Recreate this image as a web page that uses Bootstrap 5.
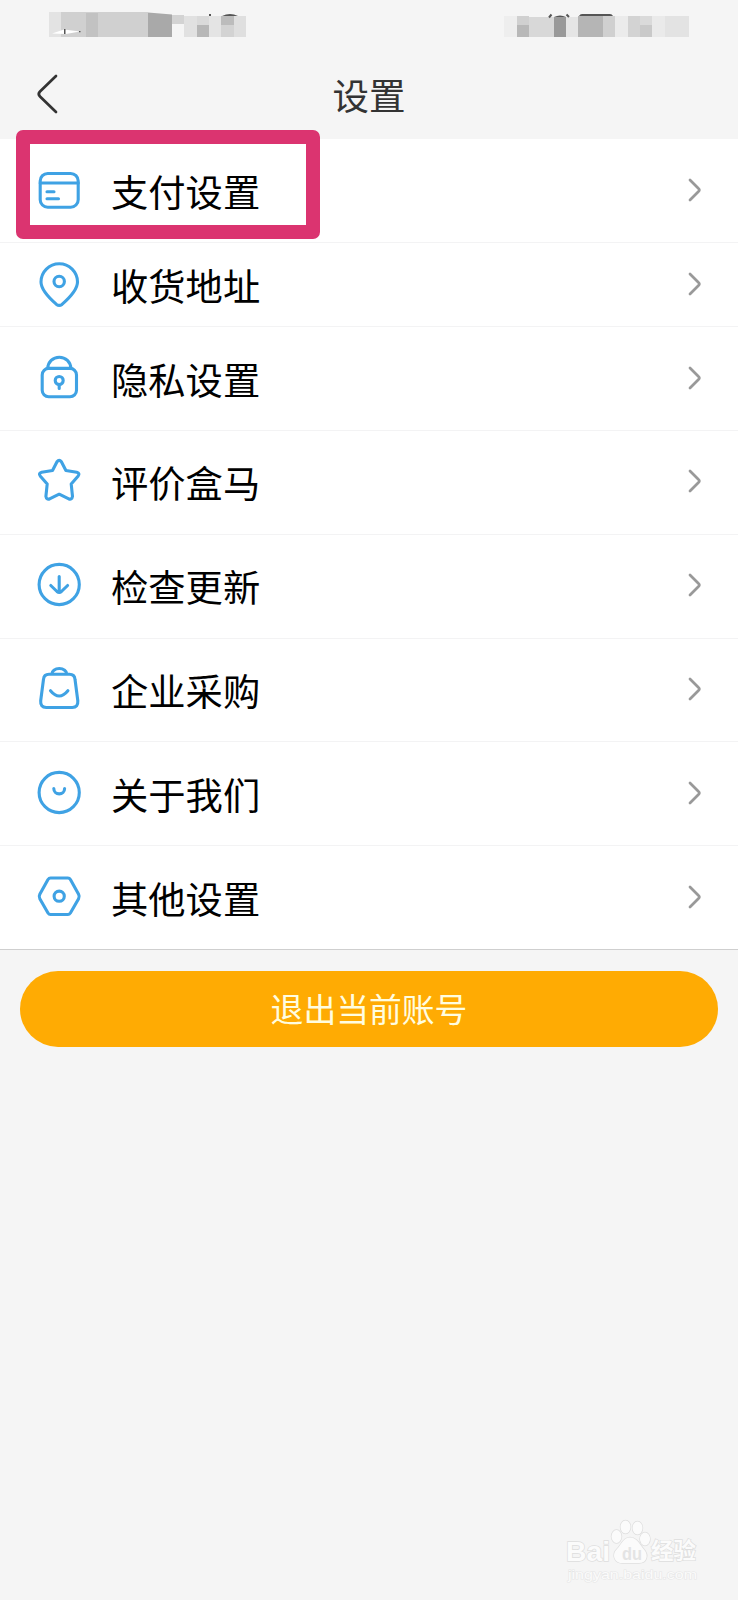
<!DOCTYPE html>
<html lang="zh-CN">
<head>
<meta charset="utf-8">
<meta name="viewport" content="width=device-width, initial-scale=1">
<title>设置</title>
<link href="https://cdn.jsdelivr.net/npm/bootstrap@5.3.0/dist/css/bootstrap.min.css" rel="stylesheet">
<style>
body{background:#f5f5f5;font-family:"Liberation Sans","Noto Sans CJK SC",sans-serif;color:#000}
.screen{min-height:1600px;overflow:hidden}
.statusbar{height:48px}
.topbar{height:91px;padding:0 34px;color:#333}
.topbar h1{font-family:"Noto Sans CJK SC",sans-serif;font-size:36.5px;line-height:50px;color:#333;padding-top:2px}
.side{width:30px}
.settings{border-bottom:1px solid #cfcfcf;background:#fff}
.settings .list-group-item{height:103.85px;padding:0 32px 1.6px 36px;border:0;border-bottom:1px solid #f3f3f4;color:#000;background:#fff}
.settings .list-group-item:last-child{border-bottom:0;height:103px}
.settings .first-row{height:104px;padding-bottom:1px}
.settings .short-row{height:84px;padding-bottom:1px}
.label-text{font-family:"Noto Sans CJK SC",sans-serif;font-size:37.3px;line-height:50px;margin-left:29px;padding-top:2px}
.ico{width:46px;height:46px;fill:none;stroke:#3fa2e4;stroke-width:3.1;stroke-linecap:round;stroke-linejoin:round}
.chev{width:20px;height:30px;fill:none;stroke:#999;stroke-width:2.8;stroke-linecap:round;stroke-linejoin:round}
.marker{position:absolute;left:16px;top:-9px;width:304px;height:109px;border:14px solid #db3470;border-radius:7px;z-index:3}
.logout{margin:21px 20px 0;height:76px;padding:0 0 3px;background:#ffab03;color:#fffde0;font-family:"Noto Sans CJK SC",sans-serif;font-size:32.8px;line-height:50px;border:0}
.logout:hover{background:#f5a300;color:#fffde0}
.mark-foot{margin:auto 38px 17px auto;width:134px;height:65px}
</style>
</head>
<body>
<div class="screen d-flex flex-column">
  <div class="statusbar">
    <svg class="d-block" width="738" height="48" aria-hidden="true">
      <g shape-rendering="crispEdges">
        <path fill="#e3e3e3" d="M49 12h12v25H49z"/><path fill="#d0d0d0" d="M61 12h87v25H61z"/>
        <path fill="#c2c2c2" d="M86 13h12v24H86z"/>
        <path fill="#d3d3d3" d="M172 15h12v9h-12z"/>
        <path fill="#e1e1e1" d="M184 16h13v21h-13z"/><path fill="#dadada" d="M197 16h12v9h-12z"/><path fill="#b7b7b7" d="M197 25h12v12h-12z"/>
        <path fill="#e4e4e4" d="M209 16h12v21h-12z"/><path fill="#bcbcbc" d="M221 16h13v9h-13z"/><path fill="#d3d3d3" d="M221 25h13v12h-13z"/><path fill="#dfdfdf" d="M234 16h12v21h-12z"/>
        <path fill="#eee" d="M504 16h13v21h-13z"/><path fill="#d0d0d0" d="M517 16h12v9h-12z"/><path fill="#b8b8b8" d="M517 25h12v12h-12z"/>
        <path fill="#d8d8d8" d="M529 17h25v20h-25z"/><path fill="#999" d="M554 17h12v20h-12z"/><path fill="#e5e5e5" d="M566 17h12v20h-12z"/>
        <path fill="#b5b5b5" d="M578 16h25v21h-25z"/><path fill="#d0d0d0" d="M603 16h12v21h-12z"/><path fill="#ebebeb" d="M615 16h13v21h-13z"/>
        <path fill="#d3d3d3" d="M628 16h12v21h-12z"/><path fill="#dadada" d="M640 16h12v9h-12z"/><path fill="#c9c9c9" d="M640 25h12v12h-12z"/>
        <path fill="#eaeaea" d="M652 16h13v21h-13z"/><path fill="#e3e3e3" d="M665 16h24v21h-24z"/>
      </g>
      <path fill="#a9a9a9" d="M148 12.500l24 2V37h-24z"/>
      <path fill="#fff" d="M52 33.500l12-4 16 2-14 2.500z"/><path fill="#555" d="M64 29h1.500v5H64zM79 31h1.500v1.200H79zM209 14h2v2h-2z"/>
      <path fill="#555" d="M222 16q8-4 16 0zM554 17q6-3 12 0zM579 16q1-2 3-2h28q2 0 3 2z"/>
      <path stroke="#555" stroke-width="2" d="M549 17.500l2.500-3M569 17l-2.500-2.500"/>
    </svg>
  </div>
  <header class="topbar d-flex align-items-center justify-content-between">
    <svg class="side" height="44" viewBox="0 0 30 44" fill="none" stroke="#333" stroke-width="2.700" stroke-linecap="round" stroke-linejoin="round" role="img" aria-label="返回"><path d="M22 4 6 19.500q-2.500 2.500 0 5L22 40"/></svg>
    <h1 class="m-0 fw-normal">设置</h1>
    <span class="side"></span>
  </header>

  <div class="list-group list-group-flush rounded-0 settings">
    <a href="#" class="list-group-item d-flex align-items-center first-row">
      <svg class="ico" viewBox="0 0 46 46"><rect x="4.200" y="6.500" width="38" height="33.700" rx="7.500"/><path d="M4.200 16h38M11 24.700h7M11 31.700h11.500"/></svg>
      <span class="label-text">支付设置</span>
      <svg class="chev ms-auto" viewBox="0 0 20 30"><path d="M4 5l8.500 8.500q1.700 1.500 0 3L4 25"/></svg>
      <span class="marker"></span>
    </a>
    <a href="#" class="list-group-item d-flex align-items-center short-row">
      <svg class="ico" viewBox="0 0 46 46"><path transform="translate(0 1.200)" d="M20.500 42.200C14 36.500 5 28 5 19.800a18.250 18.250 0 0 1 36.500 0c0 8.200-9 16.700-15.500 22.400q-2.750 2-5.500 0z"/><circle cx="23.200" cy="20.500" r="5.200"/></svg>
      <span class="label-text">收货地址</span>
      <svg class="chev ms-auto" viewBox="0 0 20 30"><path d="M4 5l8.500 8.500q1.700 1.500 0 3L4 25"/></svg>
    </a>
    <a href="#" class="list-group-item d-flex align-items-center">
      <svg class="ico" viewBox="0 0 46 46"><rect x="6.200" y="13.400" width="34.300" height="28.300" rx="6.500"/><path d="M11.800 13.400a11.500 11.200 0 0 1 23 0M23.200 29.500v4"/><circle cx="23.200" cy="25.500" r="4"/></svg>
      <span class="label-text">隐私设置</span>
      <svg class="chev ms-auto" viewBox="0 0 20 30"><path d="M4 5l8.500 8.500q1.700 1.500 0 3L4 25"/></svg>
    </a>
    <a href="#" class="list-group-item d-flex align-items-center">
      <svg class="ico" viewBox="0 0 46 46"><path d="M21 3.800q2.200-2.800 4.400 0l4.500 8.700 10.800 1.700q3.500 1 1.500 3.700l-7 8 1.300 12.500q-.5 3.500-3.700 2.500L23.200 36.200l-9.600 4.700q-3.200 1-3.700-2.500l1.300-12.500-7-8q-2-2.700 1.500-3.700l10.800-1.700z"/></svg>
      <span class="label-text">评价盒马</span>
      <svg class="chev ms-auto" viewBox="0 0 20 30"><path d="M4 5l8.500 8.500q1.700 1.500 0 3L4 25"/></svg>
    </a>
    <a href="#" class="list-group-item d-flex align-items-center">
      <svg class="ico" viewBox="0 0 46 46"><circle cx="23.200" cy="22.500" r="20.100"/><path d="M23.200 14.500v16M14.800 23.500l6.200 6q2.200 2 4.400 0l6.200-6"/></svg>
      <span class="label-text">检查更新</span>
      <svg class="chev ms-auto" viewBox="0 0 20 30"><path d="M4 5l8.500 8.500q1.700 1.500 0 3L4 25"/></svg>
    </a>
    <a href="#" class="list-group-item d-flex align-items-center">
      <svg class="ico" viewBox="0 0 46 46"><path d="M13 8.300h20.500q5 0 5.500 5l2.800 21.500q.5 6.700-5.500 6.700H10.200q-6 0-5.500-6.700l2.800-21.500q.5-5 5.500-5zM15.700 8.300a7.600 5.800 0 0 1 15.200 0M14.500 24.700q8.700 10.500 17.400 0"/></svg>
      <span class="label-text">企业采购</span>
      <svg class="chev ms-auto" viewBox="0 0 20 30"><path d="M4 5l8.500 8.500q1.700 1.500 0 3L4 25"/></svg>
    </a>
    <a href="#" class="list-group-item d-flex align-items-center">
      <svg class="ico" viewBox="0 0 46 46"><circle cx="23.200" cy="22.500" r="20.100"/><path d="M17.800 18.500a5.400 5.400 0 0 0 10.800 0"/></svg>
      <span class="label-text">关于我们</span>
      <svg class="chev ms-auto" viewBox="0 0 20 30"><path d="M4 5l8.500 8.500q1.700 1.500 0 3L4 25"/></svg>
    </a>
    <a href="#" class="list-group-item d-flex align-items-center">
      <svg class="ico" viewBox="0 0 46 46"><path d="M14.500 4h17.400q1.600 0 2.500 1.500l8.200 14.800q1.200 2.200 0 4.400l-8.200 14.300q-1 1.500-2.500 1.500H14.500q-1.500 0-2.500-1.500L3.800 24.700q-1.200-2.200 0-4.400L12 5.500Q13 4 14.500 4z"/><circle cx="23.200" cy="22.200" r="5.100"/></svg>
      <span class="label-text">其他设置</span>
      <svg class="chev ms-auto" viewBox="0 0 20 30"><path d="M4 5l8.500 8.500q1.700 1.500 0 3L4 25"/></svg>
    </a>
  </div>

  <button type="button" class="btn logout rounded-pill d-flex align-items-center justify-content-center">退出当前账号</button>

  <svg class="mark-foot" viewBox="0 0 134 65" fill="#fbfbfb" stroke="#dedede" stroke-width="1.400" paint-order="stroke">
    <ellipse cx="50.500" cy="18.500" rx="5" ry="6.500"/><ellipse cx="59.500" cy="9" rx="5" ry="6.500"/><ellipse cx="71.500" cy="10" rx="5" ry="6.500"/><ellipse cx="79" cy="21" rx="5" ry="6.500"/>
    <path d="M64 19.500c-7 0-9 8-13 11.500-6 6-2 14 5 14h17c8 0 10-8 5-13.500C74 27 71 19.500 64 19.500z"/>
    <g font-family="Liberation Sans, Noto Sans CJK SC, sans-serif" font-weight="bold">
      <text x="0" y="42.500" font-size="27" textLength="44" lengthAdjust="spacingAndGlyphs">Bai</text>
      <text x="56" y="41.500" font-size="19" textLength="20" lengthAdjust="spacingAndGlyphs" fill="#e4e4e4" stroke="none">du</text>
      <text x="85" y="41" font-size="22.500">经验</text>
    </g>
    <text x="2" y="60.800" font-family="Liberation Sans, sans-serif" font-size="13.500" textLength="129" lengthAdjust="spacingAndGlyphs" stroke="#e6e6e6" stroke-width="1">jingyan.baidu.com</text>
  </svg>
</div>
<script src="https://cdn.jsdelivr.net/npm/bootstrap@5.3.0/dist/js/bootstrap.bundle.min.js"></script>
</body>
</html>
